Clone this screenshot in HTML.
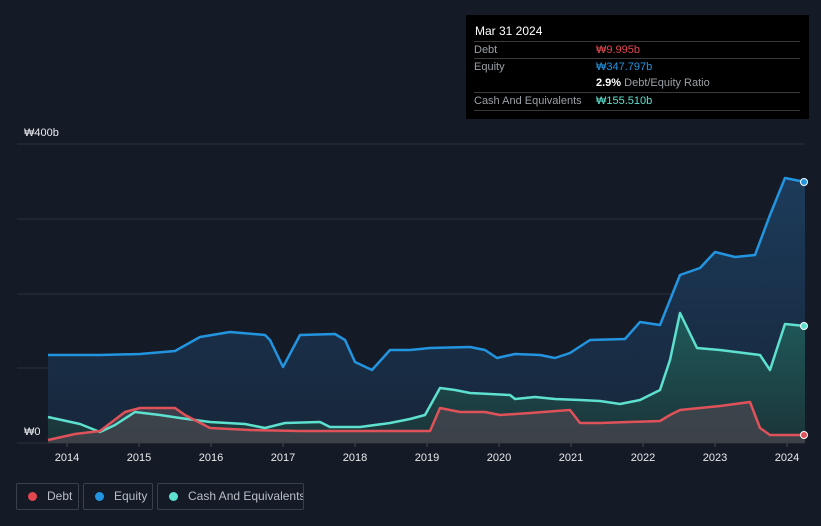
<!DOCTYPE html>
<html><head><style>
body{margin:0;background:#151b26;width:821px;height:526px;overflow:hidden;font-family:"Liberation Sans",sans-serif;position:relative}
.tt{position:absolute;left:466px;top:15px;width:343px;height:104px;background:#000;color:#fff;font-size:11px}
.row{position:absolute;left:8px;width:326px;border-top:1px solid #3a3a3a;height:17px;line-height:17px;color:#9aa0a6}
.row span{position:absolute;left:122px}
.leg{position:absolute;top:483px;height:27px;border:1px solid #3a404b;border-radius:2px;color:#b9bec6;font-size:12px;line-height:25px;box-sizing:border-box;white-space:nowrap;overflow:hidden}
.leg i{display:inline-block;width:9px;height:9px;border-radius:50%;margin:0 10px 0 11px;vertical-align:-1px}
</style></head><body>
<svg width="821" height="526" style="position:absolute;left:0;top:0">
<defs>
<linearGradient id="ge" x1="0" y1="0" x2="0" y2="1"><stop offset="0" stop-color="#1c3b5a"/><stop offset="1" stop-color="#17263a"/></linearGradient>
<linearGradient id="gc" x1="0" y1="0" x2="0" y2="1"><stop offset="0" stop-color="#1f5a5a"/><stop offset="1" stop-color="#1b3439"/></linearGradient>
</defs>
<g stroke="#2a303b" stroke-width="1">
<line x1="17" y1="144" x2="805" y2="144"/><line x1="17" y1="219" x2="805" y2="219"/><line x1="17" y1="294" x2="805" y2="294"/><line x1="17" y1="368" x2="805" y2="368"/><line x1="17" y1="443" x2="805" y2="443"/>
</g>
<polygon fill="url(#ge)" points="48,443 48,355 100,355 140,354 175,351 200,337 230,332 265,335 270,340 283,367 300,335 335,334 345,340 355,362 372,370 390,350 410,350 430,348 470,347 485,350 497,358 515,354 540,355 555,358 570,353 590,340 625,339 640,322 660,325 680,275 700,268 715,252 735,257 755,255 770,215 785,178 805,182 805,443"/>
<polygon fill="url(#gc)" points="48,443 48,417 80,424 100,432 115,425 135,412 160,415 180,418 210,422 245,424 265,428 285,423 320,422 330,427 360,427 390,423 410,419 425,415 440,388 455,390 470,393 490,394 510,395 515,399 535,397 555,399 580,400 600,401 620,404 640,400 660,390 670,360 680,313 697,348 720,350 760,355 770,370 785,324 805,326 805,443"/>
<polygon fill="#4a4750" opacity=".7" points="48,443 48,440 75,434 100,431 125,412 140,408 175,408 185,415 210,428 250,430 300,431 430,431 440,408 460,412 485,412 500,415 530,413 570,410 580,423 600,423 660,421 670,415 680,410 700,408 720,406 750,402 760,428 770,435 805,435 805,443"/>
<g fill="none" stroke-width="2.5" stroke-linejoin="round">
<polyline stroke="#2394df" points="48,355 100,355 140,354 175,351 200,337 230,332 265,335 270,340 283,367 300,335 335,334 345,340 355,362 372,370 390,350 410,350 430,348 470,347 485,350 497,358 515,354 540,355 555,358 570,353 590,340 625,339 640,322 660,325 680,275 700,268 715,252 735,257 755,255 770,215 785,178 805,182"/>
<polyline stroke="#5ee0cf" points="48,417 80,424 100,432 115,425 135,412 160,415 180,418 210,422 245,424 265,428 285,423 320,422 330,427 360,427 390,423 410,419 425,415 440,388 455,390 470,393 490,394 510,395 515,399 535,397 555,399 580,400 600,401 620,404 640,400 660,390 670,360 680,313 697,348 720,350 760,355 770,370 785,324 805,326"/>
<polyline stroke="#e0525a" points="48,440 75,434 100,431 125,412 140,408 175,408 185,415 210,428 250,430 300,431 430,431 440,408 460,412 485,412 500,415 530,413 570,410 580,423 600,423 660,421 670,415 680,410 700,408 720,406 750,402 760,428 770,435 805,435"/>
</g>
<circle cx="804" cy="182" r="3.5" fill="#2394df" stroke="#fff" stroke-width="1"/>
<circle cx="804" cy="326" r="3.5" fill="#5ee0cf" stroke="#fff" stroke-width="1"/>
<circle cx="804" cy="435" r="3.5" fill="#e0525a" stroke="#fff" stroke-width="1"/>
<g stroke="#444a55"><line x1="67" y1="443" x2="67" y2="447"/><line x1="139" y1="443" x2="139" y2="447"/><line x1="211" y1="443" x2="211" y2="447"/><line x1="283" y1="443" x2="283" y2="447"/><line x1="355" y1="443" x2="355" y2="447"/><line x1="427" y1="443" x2="427" y2="447"/><line x1="499" y1="443" x2="499" y2="447"/><line x1="571" y1="443" x2="571" y2="447"/><line x1="643" y1="443" x2="643" y2="447"/><line x1="715" y1="443" x2="715" y2="447"/><line x1="787" y1="443" x2="787" y2="447"/></g>
<g fill="#e8eaed" font-size="11" text-anchor="middle" font-family="Liberation Sans,sans-serif">
<text x="67" y="461">2014</text><text x="139" y="461">2015</text><text x="211" y="461">2016</text><text x="283" y="461">2017</text><text x="355" y="461">2018</text><text x="427" y="461">2019</text><text x="499" y="461">2020</text><text x="571" y="461">2021</text><text x="643" y="461">2022</text><text x="715" y="461">2023</text><text x="787" y="461">2024</text>
</g>
<text x="24" y="136" fill="#e8eaed" font-size="11" font-family="Liberation Sans,sans-serif">₩400b</text>
<text x="24" y="435" fill="#e8eaed" font-size="11" font-family="Liberation Sans,sans-serif">₩0</text>
</svg>
<div class="tt">
<div style="position:absolute;left:9px;top:9px;font-size:12px">Mar 31 2024</div>
<div class="row" style="top:26px">Debt<span style="color:#e0474f">₩9.995b</span></div>
<div class="row" style="top:43px">Equity<span style="color:#2394df">₩347.797b</span></div>
<div class="row" style="top:60px;border-top:none"><span><b style="color:#fff">2.9%</b> Debt/Equity Ratio</span></div>
<div class="row" style="top:77px;border-bottom:1px solid #3a3a3a">Cash And Equivalents<span style="color:#5ee0cf">₩155.510b</span></div>
</div>
<div class="leg" style="left:16px;width:63px"><i style="background:#e0474f"></i>Debt</div>
<div class="leg" style="left:83px;width:70px"><i style="background:#2394df"></i>Equity</div>
<div class="leg" style="left:157px;width:147px"><i style="background:#5ee0cf"></i>Cash And Equivalents</div>
</body></html>
